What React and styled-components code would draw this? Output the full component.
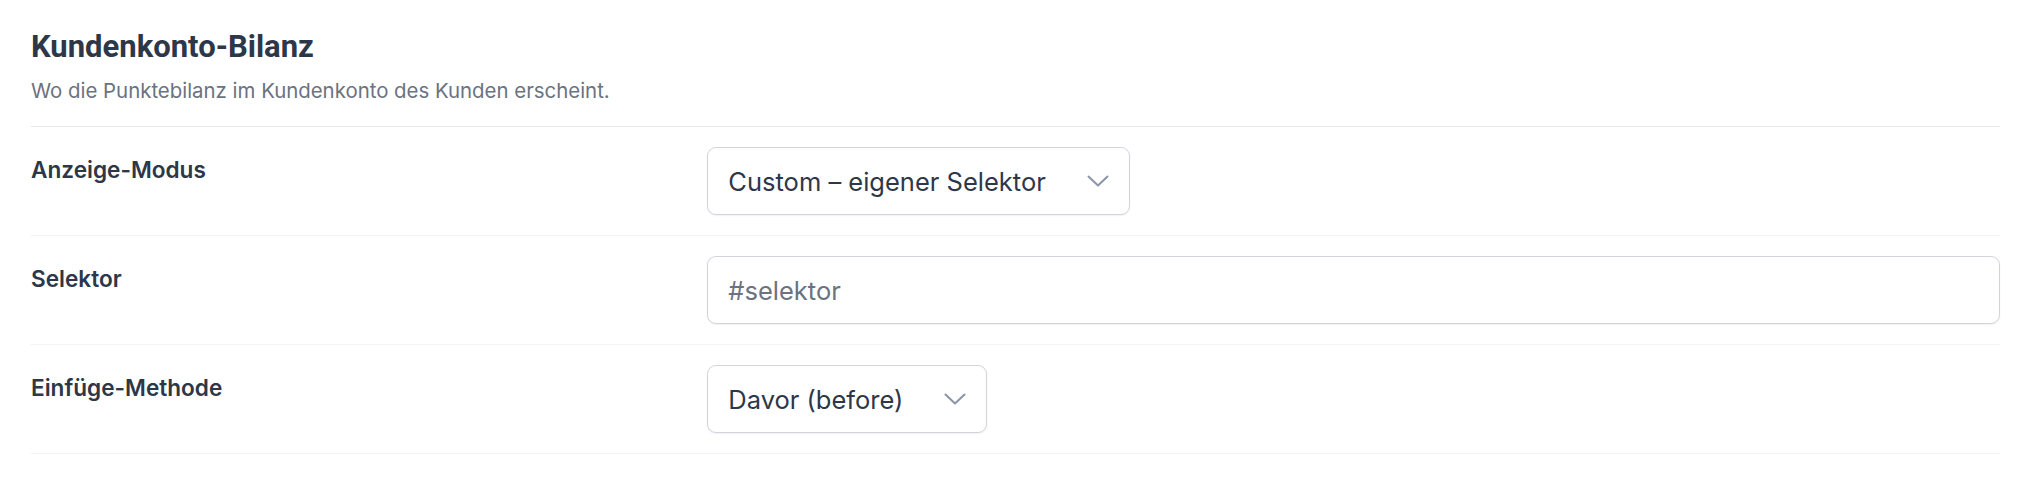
import React from 'react';
import styled, { createGlobalStyle } from 'styled-components';

const GlobalStyle = createGlobalStyle`
  body {
    margin: 0;
    background: #fff;
    font-family: Inter, "Noto Sans", sans-serif;
    color: #2d3748;
  }
`;

const Section = styled.section`
  padding: 29px 18px 0 31px;
`;

const Header = styled.header`
  padding-bottom: 21px;
  border-bottom: 1px solid #e5e7eb;
`;

const Title = styled.h2`
  margin: 0;
  font-family: Roboto, "Liberation Sans", sans-serif;
  font-size: 31px;
  line-height: 36px;
  font-weight: 700;
  letter-spacing: 0;
  color: #2d3748;
`;

const Subtitle = styled.p`
  margin: 12px 0 0;
  font-size: 20.4px;
  line-height: 28px;
  color: #6b7280;
`;

const Row = styled.div`
  display: grid;
  grid-template-columns: 1fr 2fr;
  column-gap: 30px;
  padding: 20px 0;
  border-bottom: 1px solid #f1f3f5;
`;

const Label = styled.label`
  padding-top: 7px;
  font-size: 22.6px;
  line-height: 32px;
  font-weight: 600;
  color: #2d3748;
`;

const Field = styled.div`
  display: flex;
  align-items: center;
`;

const controlBase = `
  box-sizing: border-box;
  height: 68px;
  padding: 0 20px;
  border: 1px solid #d1d5db;
  border-radius: 9px;
  background: #fff;
  box-shadow: 0 1px 2px rgba(15, 23, 42, 0.06);
  font-family: Inter, "Noto Sans", sans-serif;
  font-size: 25.5px;
  color: #2d3748;
`;

const SelectButton = styled.button`
  ${controlBase}
  display: inline-flex;
  align-items: center;
  gap: 41px;
  cursor: pointer;
`;

const TextInput = styled.input`
  ${controlBase}
  width: 100%;
  outline: none;

  &::placeholder {
    color: #6b7280;
  }
`;

const Chevron = () => (
  <svg width="22" height="12" viewBox="0 0 22 12" fill="none">
    <path d="M1.5 1.5 L11 10.5 L20.5 1.5" stroke="#8b95a7" strokeWidth="2" strokeLinecap="round" strokeLinejoin="round" />
  </svg>
);

function Select({ value }) {
  return (
    <SelectButton type="button">
      <span>{value}</span>
      <Chevron />
    </SelectButton>
  );
}

export default function App() {
  return (
    <>
      <GlobalStyle />
      <Section>
        <Header>
          <Title>Kundenkonto-Bilanz</Title>
          <Subtitle>Wo die Punktebilanz im Kundenkonto des Kunden erscheint.</Subtitle>
        </Header>
        <Row>
          <Label>Anzeige-Modus</Label>
          <Field>
            <Select value="Custom – eigener Selektor" />
          </Field>
        </Row>
        <Row>
          <Label>Selektor</Label>
          <Field>
            <TextInput placeholder="#selektor" />
          </Field>
        </Row>
        <Row>
          <Label>Einfüge-Methode</Label>
          <Field>
            <Select value="Davor (before)" />
          </Field>
        </Row>
      </Section>
    </>
  );
}
